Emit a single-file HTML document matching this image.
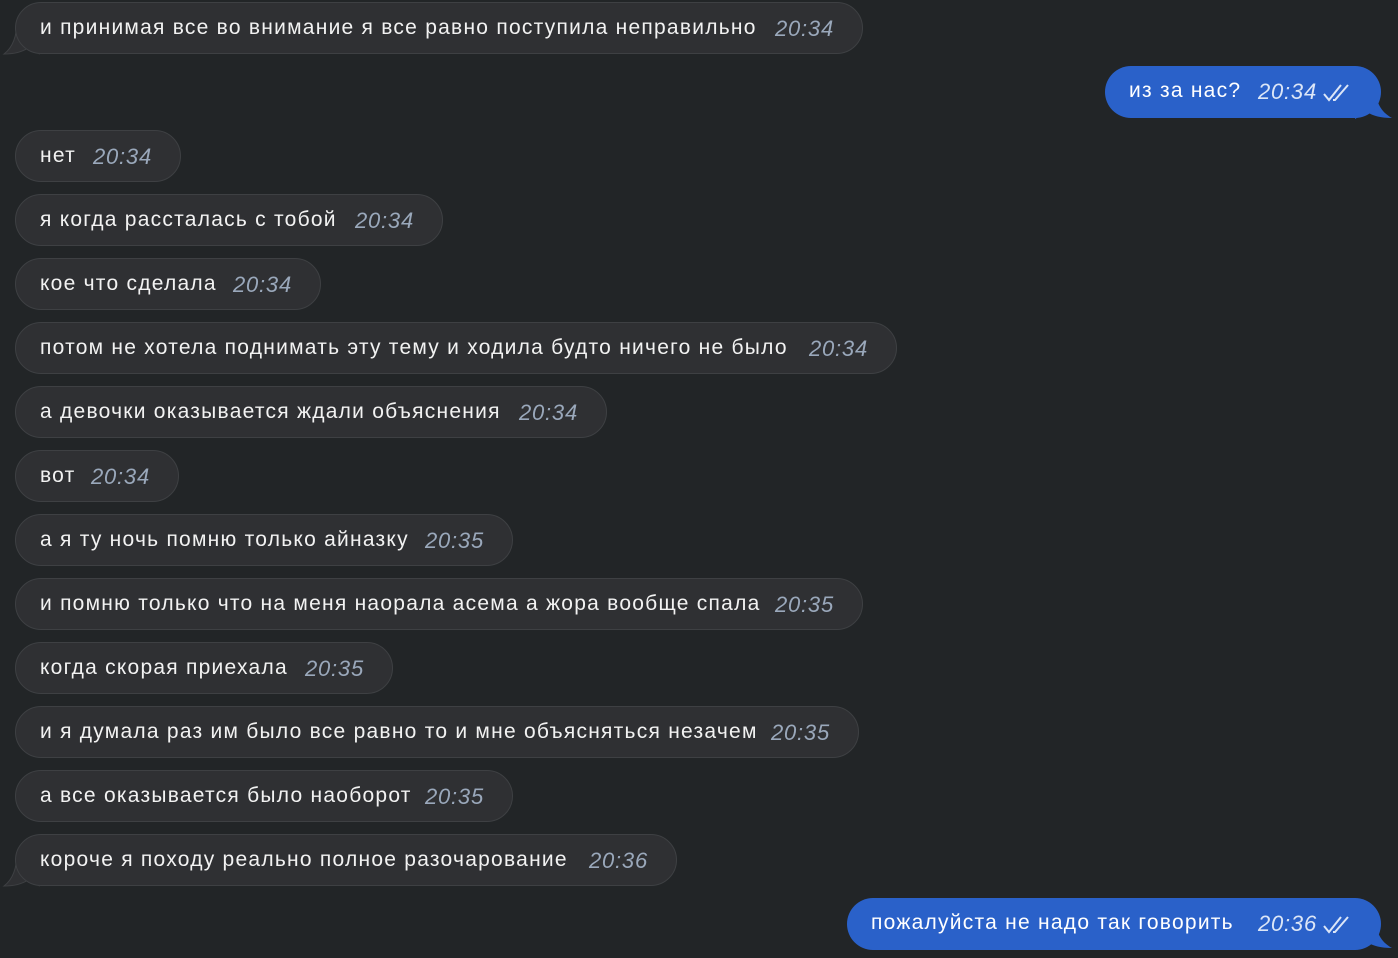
<!DOCTYPE html>
<html><head><meta charset="utf-8"><style>
body{margin:0;width:1398px;height:958px;background:#222527;overflow:hidden;font-family:"Liberation Sans",sans-serif;position:relative}
.b{position:absolute;height:52px;border-radius:27px;background:#2f3033;border:1px solid #3e4043;box-sizing:border-box;color:#f2f2f2;font-size:21px;letter-spacing:1.25px;white-space:nowrap}
.b .t{position:absolute;left:24px;top:13px}
.b .m{position:absolute;right:28px;top:13px;font-style:italic;color:#9aa8bb;font-size:22px;letter-spacing:0.8px}
.o{background:#2a61c9;border:none;color:#fff}
.o .m{color:#dce6f7;right:64px}
.o svg.c{position:absolute;right:28px;top:17px}
svg.tail{position:absolute}
</style></head><body>
<svg class="tail" style="left:0;top:20px" width="40" height="40"><path d="M17 0 C17 18 12 28 4 34 C14 34 22 32 28 28 L40 35 L40 0Z" fill="#2f3033"/><path d="M17 0 C17 18 12 28 4 34 C14 34 22 32 28 28" fill="none" stroke="#3e4043"/></svg>
<svg class="tail" style="left:0;top:852px" width="40" height="40"><path d="M17 0 C17 18 12 28 4 34 C14 34 22 32 28 28 L40 35 L40 0Z" fill="#2f3033"/><path d="M17 0 C17 18 12 28 4 34 C14 34 22 32 28 28" fill="none" stroke="#3e4043"/></svg>
<svg class="tail" style="left:1355px;top:84px" width="40" height="40"><path d="M20 0 C20 18 26 28 37 34 C26 34 18 32 12 28 L0 35 L0 0Z" fill="#2a61c9"/></svg>
<svg class="tail" style="left:1355px;top:914px" width="40" height="40"><path d="M20 0 C20 18 26 28 37 34 C26 34 18 32 12 28 L0 35 L0 0Z" fill="#2a61c9"/></svg>

<div class="b" style="left:15px;top:2px;width:848px"><span class="t">и принимая все во внимание я все равно поступила неправильно</span><span class="m">20:34</span></div>
<div class="b o" style="left:1105px;top:66px;width:276px"><span class="t">из за нас?</span><span class="m">20:34</span><svg class="c" width="30" height="20" viewBox="0 0 30 20" fill="none" stroke="#dce6f7" stroke-width="2"><path d="M1 11 L6 17 L18 2"/><path d="M10 17 L12 17 L25 2"/></svg></div>
<div class="b" style="left:15px;top:130px;width:166px"><span class="t">нет</span><span class="m">20:34</span></div>
<div class="b" style="left:15px;top:194px;width:428px"><span class="t">я когда рассталась с тобой</span><span class="m">20:34</span></div>
<div class="b" style="left:15px;top:258px;width:306px"><span class="t">кое что сделала</span><span class="m">20:34</span></div>
<div class="b" style="left:15px;top:322px;width:882px"><span class="t">потом не хотела поднимать эту тему и ходила будто ничего не было</span><span class="m">20:34</span></div>
<div class="b" style="left:15px;top:386px;width:592px"><span class="t">а девочки оказывается ждали объяснения</span><span class="m">20:34</span></div>
<div class="b" style="left:15px;top:450px;width:164px"><span class="t">вот</span><span class="m">20:34</span></div>
<div class="b" style="left:15px;top:514px;width:498px"><span class="t">а я ту ночь помню только айназку</span><span class="m">20:35</span></div>
<div class="b" style="left:15px;top:578px;width:848px"><span class="t">и помню только что на меня наорала асема а жора вообще спала</span><span class="m">20:35</span></div>
<div class="b" style="left:15px;top:642px;width:378px"><span class="t">когда скорая приехала</span><span class="m">20:35</span></div>
<div class="b" style="left:15px;top:706px;width:844px"><span class="t">и я думала раз им было все равно то и мне объясняться незачем</span><span class="m">20:35</span></div>
<div class="b" style="left:15px;top:770px;width:498px"><span class="t">а все оказывается было наоборот</span><span class="m">20:35</span></div>
<div class="b" style="left:15px;top:834px;width:662px"><span class="t">короче я походу реально полное разочарование</span><span class="m">20:36</span></div>
<div class="b o" style="left:847px;top:898px;width:534px"><span class="t">пожалуйста не надо так говорить</span><span class="m">20:36</span><svg class="c" width="30" height="20" viewBox="0 0 30 20" fill="none" stroke="#dce6f7" stroke-width="2"><path d="M1 11 L6 17 L18 2"/><path d="M10 17 L12 17 L25 2"/></svg></div>
</body></html>
